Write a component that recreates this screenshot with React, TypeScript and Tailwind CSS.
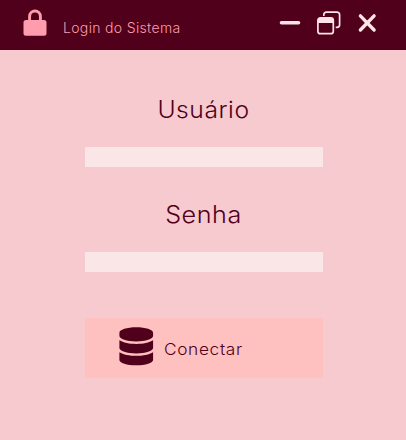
const LockIcon = () => (
  <svg className="ml-[23px] mt-[9px] h-[27px] w-6 shrink-0" viewBox="0 0 24 27" fill="none">
    <path d="M6.6 12V7.4a5.4 5.4 0 0 1 10.8 0V12" stroke="#ff9dae" strokeWidth="2.9" />
    <rect x="0.5" y="11" width="23" height="15.7" rx="2.5" fill="#ff9dae" />
  </svg>
);

const DatabaseIcon = () => (
  <svg className="ml-[34px] mt-[9px] h-[39px] w-[35px] shrink-0" viewBox="0 0 35 39" fill="#50001a">
    <path
      transform="translate(0.4 0.2) scale(0.0752 0.0745)"
      d="M448 73.143v45.714C448 159.143 347.667 192 224 192S0 159.143 0 118.857V73.143C0 32.857 100.333 0 224 0s224 32.857 224 73.143zM448 176v102.857C448 319.143 347.667 352 224 352S0 319.143 0 278.857V176c48.125 33.143 136.208 48.572 224 48.572S399.874 209.143 448 176zm0 160v102.857C448 479.143 347.667 512 224 512S0 479.143 0 438.857V336c48.125 33.143 136.208 48.572 224 48.572S399.874 369.143 448 336z"
    />
  </svg>
);

const WindowControls = () => (
  <div className="mr-[29px] mt-[11px] flex h-[24px] text-[#ffe3e7]">
    <button aria-label="Minimizar" className="mr-[16px]">
      <svg className="block h-6 w-[22px]" viewBox="0 0 22 24" stroke="currentColor" strokeWidth="3.4" strokeLinecap="round">
        <path d="M2.4 11.8H19.6" />
      </svg>
    </button>
    <button aria-label="Restaurar" className="mr-4">
      <svg className="block h-6 w-6" viewBox="0 0 24 24" fill="none" stroke="currentColor" strokeWidth="1.7">
        <path d="M6.8 5V3.7A2.6 2.6 0 0 1 9.4 1.1H20A2.6 2.6 0 0 1 22.6 3.7V13.8A2.6 2.6 0 0 1 20 16.4H18.7" />
        <rect x="0.9" y="6.8" width="15.4" height="15.9" rx="2.5" />
        <path d="M1 12V9.3A2.5 2.5 0 0 1 3.5 6.8H13.7A2.5 2.5 0 0 1 16.2 9.3V12Z" fill="currentColor" stroke="none" />
      </svg>
    </button>
    <button aria-label="Fechar">
      <svg className="block h-6 w-5" viewBox="0 0 20 24" stroke="currentColor" strokeWidth="3.4" strokeLinecap="round">
        <path d="M3.4 4.9L17.1 19M17.1 4.9L3.4 19" />
      </svg>
    </button>
  </div>
);

export default function App() {
  return (
    <main className="flex h-[440px] w-[406px] flex-col overflow-hidden bg-[#f7cad0] font-['Inter',sans-serif] font-light text-[#50001a]">
      <header className="flex h-[50px] shrink-0 items-start bg-[#50001a]">
        <LockIcon />
        <h1 className="ml-4 mt-[18px] whitespace-nowrap text-[14px] leading-5 tracking-[0.33px] text-[#ff9dae]">Login do Sistema</h1>
        <div className="flex-1" />
        <WindowControls />
      </header>
      <form className="flex flex-col pl-[85px] pr-[83px]" onSubmit={(e) => e.preventDefault()}>
        <label htmlFor="usuario" className="mt-11 h-8 origin-center scale-x-[1.05] pr-px text-center text-[23.5px] leading-8 tracking-[0.5px]">Usuário</label>
        <input id="usuario" className="mt-[21px] h-5 bg-[#fae5e7] px-1 text-sm outline-none" />
        <label htmlFor="senha" className="mt-8 h-8 origin-center scale-x-[1.07] pr-px text-center text-[23.5px] leading-8 tracking-[0.5px]">Senha</label>
        <input id="senha" type="password" className="mt-[21px] h-5 bg-[#fae5e7] px-1 text-sm outline-none" />
        <button type="submit" className="mt-[46px] flex h-[60px] items-start bg-[#ffc0c0] text-left">
          <DatabaseIcon />
          <span className="ml-[10px] mt-[19px] origin-left scale-x-[1.08] text-[16px] leading-6 tracking-[0.6px]">Conectar</span>
        </button>
      </form>
    </main>
  );
}
